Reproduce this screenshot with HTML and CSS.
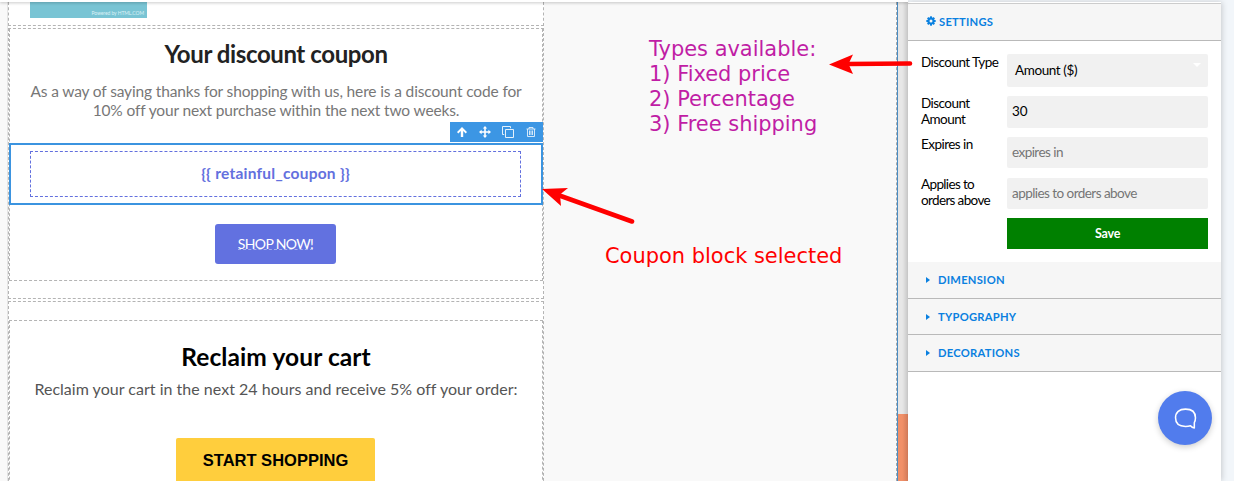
FILE: index.html
```html
<!DOCTYPE html>
<html lang="en">
<head>
<meta charset="utf-8">
<title>Email editor</title>
<link rel="stylesheet" href="styles.css">
</head>
<body>
<header class="topbar"></header>
<div class="app">
  <main class="canvas">
    <div class="mail">
      <section class="block block-image"><div class="banner"><span>Powered by HTML.COM</span></div></section>
      <section class="block block-coupon">
        <div class="cell">
          <h1 class="title">Your discount coupon</h1>
          <p class="lead">As a way of saying thanks for shopping with us, here is a discount code for<br>10% off your next purchase within the next two weeks.</p>
          <div class="selected">
            <div class="tools">
              <svg class="tool" viewBox="0 0 12 12"><path d="M6 1 11 6 9.7 7.4 7.2 5V11H4.8V5L2.3 7.4 1 6Z" fill="#fff"/></svg>
              <svg class="tool" viewBox="0 0 12 12"><path d="M6 0 8.2 2.6H6.8V5.2H9.4V3.8L12 6 9.4 8.2V6.8H6.8V9.4H8.2L6 12 3.8 9.4H5.2V6.8H2.6V8.2L0 6 2.6 3.8V5.2H5.2V2.6H3.8Z" fill="#fff"/></svg>
              <svg class="tool" viewBox="0 0 12 12"><path d="M3.5 3.5h8v8h-8zM2.2 8.5H.5v-8h8v1.7" fill="none" stroke="#e4f1fb" stroke-width="1"/></svg>
              <svg class="tool" viewBox="0 0 12 12"><path d="M1.5 3h9M4 3V1.5h4V3M2.5 3v7.500h7V3M4.500 4.500v4.500M6 4.500v4.500M7.500 4.500v4.500" fill="none" stroke="#e4f1fb" stroke-width=".9"/></svg>
            </div>
            <div class="code">{{ retainful_coupon }}</div>
          </div>
          <a class="shop"><span>SHOP NOW!</span></a>
        </div>
      </section>
      <section class="block block-cart">
        <div class="cell cell-cart">
          <h1 class="title title-cart">Reclaim your cart</h1>
          <p class="note">Reclaim your cart in the next 24 hours and receive 5% off your order:</p>
          <a class="start">START SHOPPING</a>
        </div>
      </section>
    </div>
  </main>
  <div class="gutter"><div class="orange"></div></div>
  <aside class="panel">
    <h2 class="bar bar-settings">
      <svg class="gear" viewBox="0 0 12 12"><g fill="#0a80e0"><rect x="4.8" y="0.4" width="2.4" height="11.2"/><rect x="4.8" y="0.4" width="2.4" height="11.2" transform="rotate(45 6 6)"/><rect x="4.8" y="0.4" width="2.4" height="11.2" transform="rotate(90 6 6)"/><rect x="4.8" y="0.4" width="2.4" height="11.2" transform="rotate(135 6 6)"/></g><circle cx="6" cy="6" r="3.1" fill="none" stroke="#0a80e0" stroke-width="2.6"/><circle cx="6" cy="6" r="1.8" fill="#f6f6f6"/></svg>
      <span>SETTINGS</span>
    </h2>
    <form class="form">
      <label>Discount Type</label><div class="field select">Amount ($)<i class="caret"></i></div>
      <label>Discount<br>Amount</label><div class="field">30</div>
      <label>Expires in</label><div class="field hint">expires in</div>
      <label class="tight">Applies to<br>orders above</label><div class="field hint">applies to orders above</div>
      <div class="save">Save</div>
    </form>
    <h2 class="bar"><i class="tri"></i><span>DIMENSION</span></h2>
    <h2 class="bar bar-short"><i class="tri"></i><span>TYPOGRAPHY</span></h2>
    <h2 class="bar"><i class="tri"></i><span>DECORATIONS</span></h2>
  </aside>
</div>
<p class="callout callout-types">Types available:<br>1) Fixed price<br>2) Percentage<br>3) Free shipping</p>
<p class="callout callout-coupon">Coupon block selected</p>
<svg class="arrows" viewBox="0 0 1234 481">
  <g fill="red" stroke="none"><path d="M829 64.5 853 54.5 848.5 64 853 74Z"/><path d="M542 189 568 188 560 194.5 561 206Z"/></g>
  <path d="M847 64 910 63.5M558 195 632 221.5" fill="none" stroke="red" stroke-width="4.6" stroke-linecap="round"/>
</svg>
<div class="chat">
  <svg viewBox="0 0 24 24"><path d="M21.200 21.800V16.400C22 15 22.400 13.300 22.400 11.300 22.400 5.500 18.500 2.200 12 2.200S1.600 5.500 1.600 11.300 5.500 20.300 12 20.300C14 20.300 15.600 20.100 17.200 19.600 18.300 20.900 19.500 21.600 21.200 21.800Z" fill="none" stroke="#fff" stroke-width="1.6" stroke-linejoin="round"/></svg>
</div>
</body>
</html>
```
FILE: styles.css
```css
* { box-sizing: border-box; }
html, body { margin: 0; height: 481px; overflow: hidden; }
body { position: relative; background: #f2f6fa; font-family: Lato, sans-serif; }
h1, h2, p { margin: 0; }
svg { display: block; }

.topbar { width: 908px; height: 2px; background: #fff; position: relative; z-index: 1; box-shadow: 0 1px 3px rgba(0, 0, 0, .25); }
.app { display: grid; grid-template-columns: 898px 10px 313px; height: 479px; }
.canvas { background: #f9f9f9; border-right: 1px solid #4a8dc4; padding-left: 7px; position: relative; overflow: hidden; }
.canvas::after { content: ""; position: absolute; right: 0; top: 0; bottom: 0; border-right: 1px dashed #aaa; }
.mail { width: 537px; height: 479px; background: #fff; border-left: 1px solid #e4e4e4; }
.block { border: 1px dashed #b4b4b4; text-align: center; }
.block-image { height: 24px; border-top: 0; margin-bottom: 2px; padding-left: 21px; }
.banner { width: 117px; height: 16px; background: #79c4d4; color: #d9f1f5; font-size: 5px; line-height: 22px; text-align: right; padding-right: 3px; letter-spacing: -.08px; }
.block-coupon { height: 271px; margin-bottom: 2px; }
.cell { height: 252px; border: 1px dashed #b4b4b4; border-top: 0; position: relative; }
.title { padding-top: 10px; font-size: 24px; line-height: 30px; color: #222; font-weight: 700; letter-spacing: -.4px; }
.lead { margin-top: 13px; height: 61px; font-size: 15.5px; line-height: 19px; letter-spacing: -.14px; color: #777; white-space: nowrap; }
.selected { position: relative; margin: 0 -1px 0 -1px; height: 62px; border: 2px solid #3b94e0; padding: 6px 20px 6px 19px; }
.tools { position: absolute; right: -2px; top: -23px; width: 93px; height: 20px; background: #3c96e4; display: flex; align-items: center; justify-content: space-between; padding: 0 6px; }
.tool { width: 12px; height: 12px; }
.code { height: 46px; border: 1px dashed #6370de; color: #6370de; font-size: 15.5px; line-height: 43px; font-weight: 700; letter-spacing: .25px; }
.shop { display: flex; width: 121px; height: 40px; margin: 19px auto 0 205px; border-radius: 3px; background: #6271e0; color: #fff; font-size: 14px; line-height: 16px; align-items: center; justify-content: center; }
.shop span { height: 12px; line-height: 11px; border-bottom: 1px dashed #a6aeed; white-space: nowrap; letter-spacing: -.65px; }
.block-cart { height: 190px; padding-top: 18px; }
.cell-cart { height: 190px; border-top: 1px dashed #b4b4b4; }
.title-cart { padding-top: 21px; color: #000; font-size: 24.5px; letter-spacing: .1px; }
.note { margin-top: 7px; font-size: 16px; line-height: 20px; letter-spacing: .02px; color: #555; white-space: nowrap; }
.start { display: block; width: 199px; height: 50px; margin: 39px auto 0 166px; border-radius: 2px; background: #ffce3d; font: bold 16.5px/45px "Liberation Sans", sans-serif; }

.gutter { background: linear-gradient(90deg, #e7e7e7 40%, #d2d2d2); display: flex; align-items: flex-end; }
.orange { width: 10px; height: 67px; background: linear-gradient(90deg, #f19068 40%, #dc815e); }
.panel { background: #fff; box-shadow: 1px 0 6px rgba(0, 0, 0, .18); }
.bar { height: 37px; background: #f6f6f6; border-bottom: 1px solid #b9b9b9; display: flex; align-items: center; padding: 0 0 1px 18px; color: #0a80e0; font-size: 11.2px; font-weight: 700; letter-spacing: .25px; }
.bar-short { height: 36px; padding-bottom: 0; }
.bar-settings { height: 38px; margin-top: 1px; border-top: 1px solid #ccc; padding-bottom: 2px; }
.gear { width: 10px; height: 10px; margin-right: 3px; }
.tri { border-left: 4px solid #0a80e0; border-top: 3px solid transparent; border-bottom: 3px solid transparent; margin-right: 8px; }
.form { height: 221px; padding: 13px 13px 0; display: grid; grid-template-columns: 86px 201px; grid-template-rows: 42px 41px 41px 40px 31px; font-size: 13.5px; line-height: 16px; color: #000; }
.form label { white-space: nowrap; letter-spacing: -.55px; margin-top: -1px; }
.form label:first-child { margin-top: 0; }
.form .tight { margin-top: -2px; letter-spacing: -.65px; }
.field { height: 32px; background: #f1f1f1; border-radius: 2px; padding-left: 5px; line-height: 31px; position: relative; letter-spacing: -.2px; }
.select { height: 33px; padding-left: 8px; line-height: 33px; letter-spacing: -.4px; }
.hint { height: 31px; color: #757575; letter-spacing: -.55px; }
.caret { position: absolute; right: 7px; top: 9px; border: 4px solid transparent; border-top-color: #fff; border-bottom: 0; }
.save { grid-column: 2; background: green; color: #fff; font-size: 12.5px; font-weight: 700; line-height: 31px; text-align: center; letter-spacing: -.2px; }

.callout { position: absolute; font: 20.95px/25px "DejaVu Sans", sans-serif; white-space: nowrap; }
.callout-types { left: 649px; top: 37px; color: #c01da5; }
.callout-coupon { left: 605px; top: 244px; color: red; }
.arrows { position: absolute; z-index: 2; left: 0; top: 0; width: 1234px; height: 481px; pointer-events: none; }
.chat { position: absolute; left: 1158px; top: 391px; width: 54px; height: 54px; border-radius: 50%; background: #517ced; box-shadow: 0 2px 6px rgba(0, 0, 0, .2); display: grid; place-items: center; }
.chat svg { width: 23px; height: 23px; }
```
